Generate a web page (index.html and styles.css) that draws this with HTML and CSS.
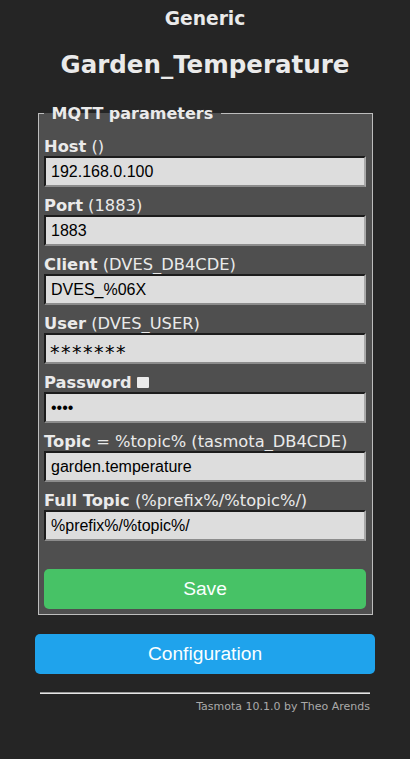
FILE: index.html
```html
<!DOCTYPE html>
<html>
<head>
<meta charset="utf-8">
<title>Generic - MQTT</title>
<link rel="stylesheet" href="styles.css">
</head>
<body>
<div class="wrap">
  <header class="head">
    <h3 class="dev">Generic</h3>
    <h2 class="name">Garden_Temperature</h2>
  </header>
  <fieldset class="box">
    <legend class="legend">&nbsp;MQTT parameters&nbsp;</legend>
    <div class="fields">
      <div class="field"><label class="lbl"><b>Host</b> ()</label><input class="inp" type="text" value="192.168.0.100"></div>
      <div class="field"><label class="lbl"><b>Port</b> (1883)</label><input class="inp" type="text" value="1883"></div>
      <div class="field"><label class="lbl"><b>Client</b> (DVES_DB4CDE)</label><input class="inp" type="text" value="DVES_%06X"></div>
      <div class="field"><label class="lbl"><b>User</b> (DVES_USER)</label><input class="inp stars" type="text" value="*******"></div>
      <div class="field"><label class="lbl"><b>Password</b> <span class="chk"></span></label><input class="inp" type="password" value="abcd"></div>
      <div class="field"><label class="lbl"><b>Topic</b> = %topic% (tasmota_DB4CDE)</label><input class="inp" type="text" value="garden.temperature"></div>
      <div class="field"><label class="lbl"><b>Full Topic</b> (%prefix%/%topic%/)</label><input class="inp" type="text" value="%prefix%/%topic%/"></div>
    </div>
    <button class="btn save">Save</button>
  </fieldset>
  <button class="btn conf">Configuration</button>
  <footer class="foot">
    <hr class="rule">
    <span class="ver">Tasmota 10.1.0 by Theo Arends</span>
  </footer>
</div>
</body>
</html>
```
FILE: styles.css
```css
html, body {
  margin: 0;
  padding: 0;
  background: #252525;
}
body {
  font-family: "DejaVu Sans", Verdana, sans-serif;
  color: #eaeaea;
}
.wrap {
  width: 340px;
  margin: 0 auto;
}
.head {
  text-align: center;
  color: #eaeaea;
}
.dev {
  margin: 0;
  padding-top: 8px;
  font-size: 18.7px;
  line-height: 22px;
  font-weight: bold;
}
.name {
  margin: 21px 0 0;
  font-size: 24.5px;
  line-height: 28px;
  font-weight: bold;
}
.box {
  margin: 25px 2px 0 3px;
  padding: 14px 6px 5px 5px;
  background: #4f4f4f;
  border: 1px solid #bdbdbd;
  min-width: 0;
}
.legend {
  padding: 0 2px;
  font-size: 16px;
  line-height: 19px;
  font-weight: bold;
  color: #eaeaea;
}
.fields {
  display: flex;
  flex-direction: column;
  gap: 9px;
}
.field {
  display: flex;
  flex-direction: column;
}
.lbl {
  display: block;
  height: 19px;
  font-size: 16.3px;
  line-height: 19px;
  color: #eaeaea;
  white-space: nowrap;
}
.chk {
  display: inline-block;
  width: 12px;
  height: 11px;
  background: #ececec;
  border-radius: 1px;
  vertical-align: baseline;
}
.inp {
  box-sizing: border-box;
  width: 100%;
  height: 31px;
  margin: 0;
  padding: 0 5px;
  font-family: "Liberation Sans", Arial, sans-serif;
  font-size: 16px;
  color: #000;
  background: #dddddd;
  border-style: solid;
  border-width: 2px;
  border-color: #1c1c1c #a9a9a9 #8c8c8c #1c1c1c;
  outline: none;
}
.stars {
  font-family: "DejaVu Sans", Verdana, sans-serif;
  font-size: 19px;
  letter-spacing: 1.5px;
  padding-top: 7px;
  padding-left: 4px;
}
.btn {
  display: block;
  width: 100%;
  height: 40px;
  border: 0;
  border-radius: 5px;
  color: #faffff;
  font-family: "Liberation Sans", Arial, sans-serif;
  font-size: 19.2px;
  line-height: 40px;
  padding: 0;
  text-align: center;
}
.save {
  margin-top: 28px;
  background: #47c266;
}
.conf {
  margin-top: 19px;
  background: #1fa3ec;
}
.foot {
  text-align: right;
  font-size: 11px;
  line-height: 13px;
  padding: 0 5px;
}
.rule {
  margin: 18px 0 6px;
  height: 0;
  border: 0;
  border-top: 1px solid #9a9a9a;
  border-bottom: 1px solid #e6e6e6;
}
.ver {
  color: #aaaaaa;
}
```
